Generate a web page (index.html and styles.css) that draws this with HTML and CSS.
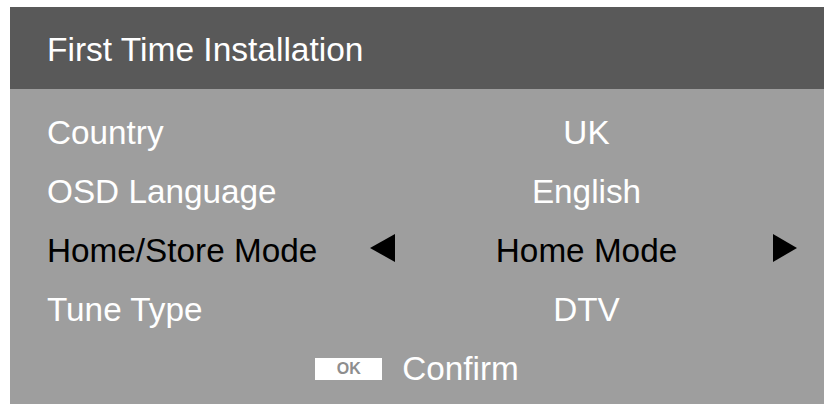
FILE: index.html
```html
<!DOCTYPE html>
<html lang="en">
<head>
<meta charset="utf-8">
<title>First Time Installation</title>
<link rel="stylesheet" href="styles.css">
</head>
<body>
<div class="panel">
  <div class="header">First Time Installation</div>
  <div class="body">
    <div class="row">
      <div class="label">Country</div>
      <div class="arrow"></div>
      <div class="value">UK</div>
      <div class="arrow"></div>
    </div>
    <div class="row">
      <div class="label">OSD Language</div>
      <div class="arrow"></div>
      <div class="value">English</div>
      <div class="arrow"></div>
    </div>
    <div class="row selected">
      <div class="label">Home/Store Mode</div>
      <div class="arrow left"><svg width="25" height="28" viewBox="0 0 25 28"><polygon points="25,0 25,28 0,14" fill="#000"/></svg></div>
      <div class="value">Home Mode</div>
      <div class="arrow right"><svg width="24" height="28" viewBox="0 0 24 28"><polygon points="0,0 24,14 0,28" fill="#000"/></svg></div>
    </div>
    <div class="row">
      <div class="label">Tune Type</div>
      <div class="arrow"></div>
      <div class="value">DTV</div>
      <div class="arrow"></div>
    </div>
    <div class="confirm">
      <span class="okbox">OK</span>
      <span class="confirm-text">Confirm</span>
    </div>
  </div>
</div>
</body>
</html>
```

FILE: styles.css
```css
html, body {
  margin: 0;
  padding: 0;
  background: #ffffff;
}

body {
  font-family: "Liberation Sans", Arial, sans-serif;
}

.panel {
  margin: 7px 0 0 10px;
  width: 814px;
  height: 397px;
  display: flex;
  flex-direction: column;
}

.header {
  box-sizing: border-box;
  height: 82px;
  background: #595959;
  color: #ffffff;
  font-size: 33.5px;
  line-height: 38px;
  padding: 24px 0 0 37px;
}

.body {
  box-sizing: border-box;
  flex: 1;
  background: #9e9e9e;
  padding: 13.5px 0 0 37px;
  display: flex;
  flex-direction: column;
}

.row {
  display: grid;
  grid-template-columns: 323px 25px 378px 24px;
  height: 59.25px;
  font-size: 33.3px;
  line-height: 59.25px;
  color: #ffffff;
}

.row.selected {
  color: #000000;
}

.label {
  white-space: nowrap;
}

.value {
  text-align: center;
  padding-left: 5px;
  white-space: nowrap;
}

.arrow svg {
  display: block;
  margin-top: 12.5px;
}

.confirm {
  display: flex;
  align-items: center;
  justify-content: center;
  gap: 20px;
  height: 59.25px;
  margin-left: -37px;
  font-size: 33.3px;
  line-height: 38px;
  color: #ffffff;
}

.okbox {
  display: flex;
  align-items: center;
  justify-content: center;
  width: 67px;
  height: 22px;
  background: #ffffff;
  color: #8e8e8e;
  font-size: 16px;
  line-height: 22px;
  font-weight: bold;
  margin-top: -1px;
}
```
